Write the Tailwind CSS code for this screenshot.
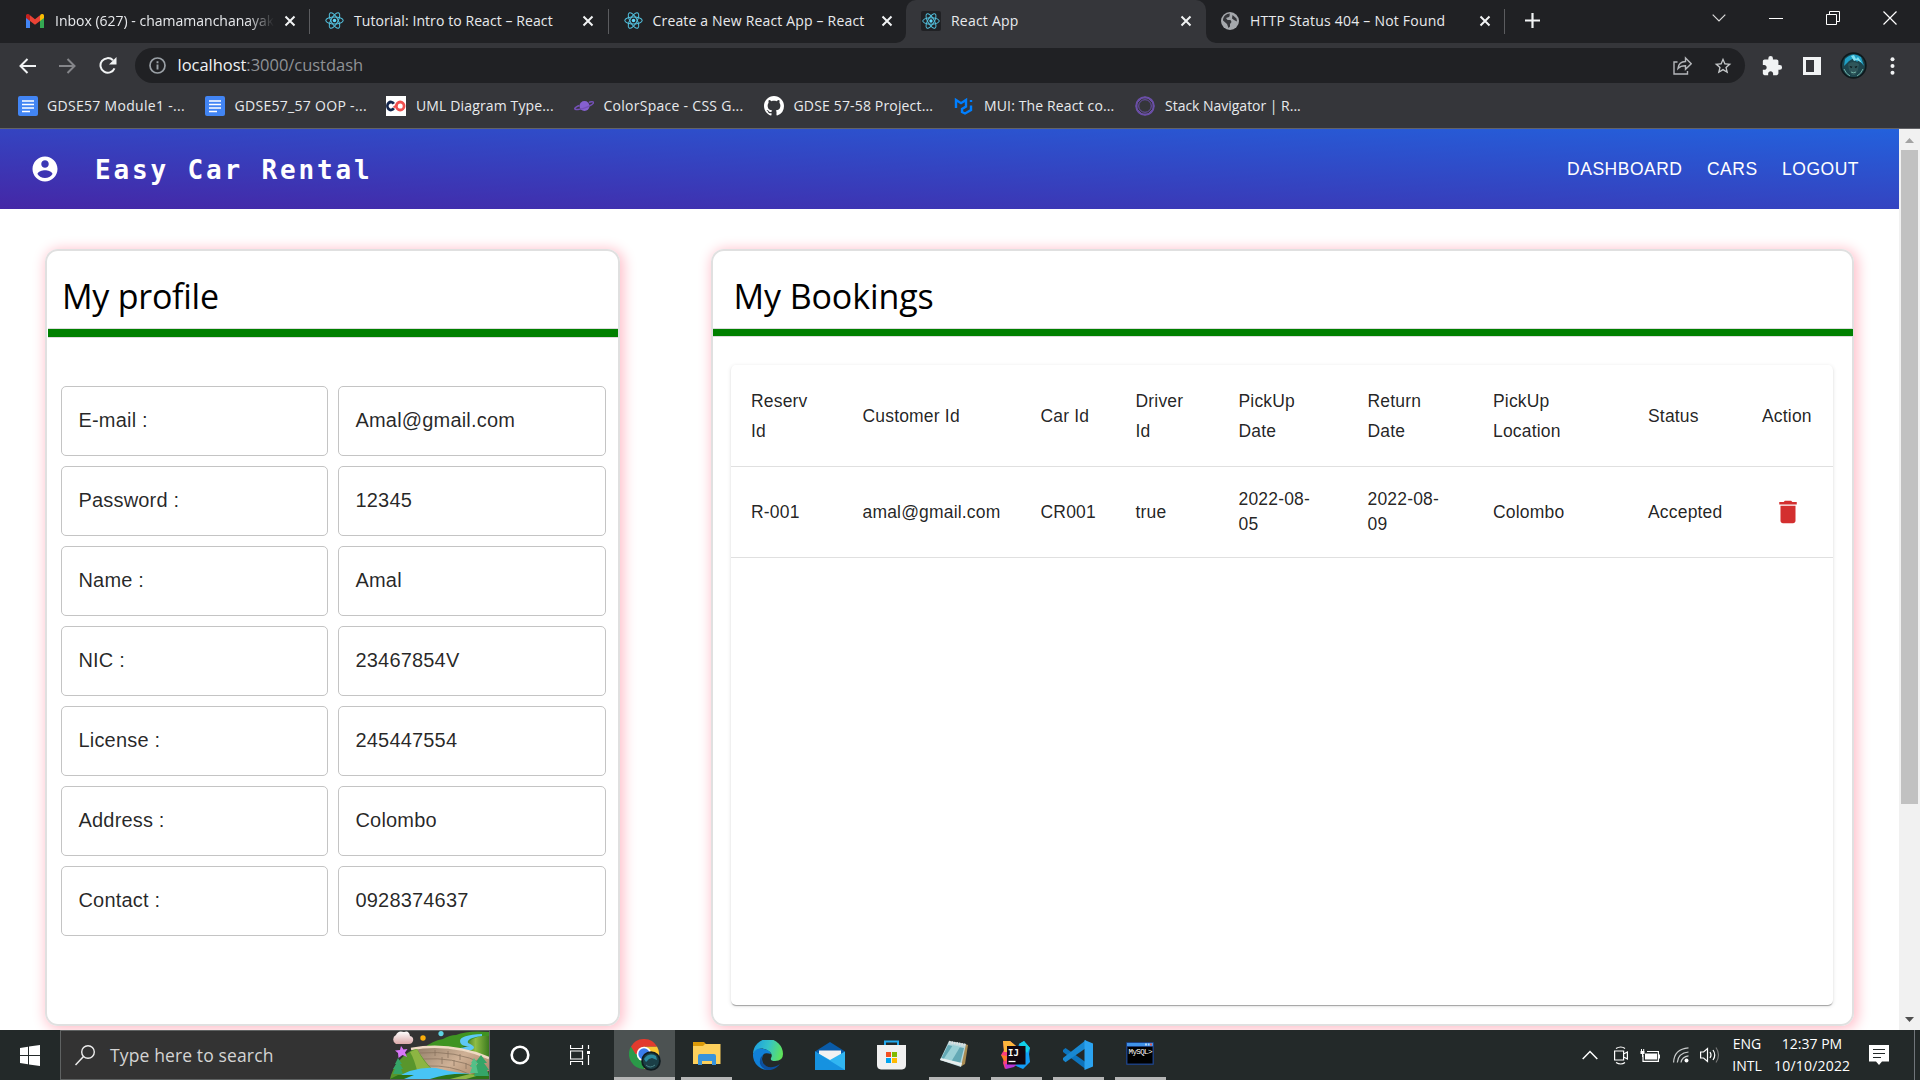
<!DOCTYPE html>
<html lang="en">
<head>
<meta charset="utf-8">
<title>React App</title>
<script src="https://cdn.jsdelivr.net/npm/@tailwindcss/browser@4"></script>
</head>
<body class="w-[1920px] h-[1080px] overflow-hidden bg-white flex flex-col font-['Open_Sans',sans-serif] whitespace-nowrap">
<svg class="hidden">
  <symbol id="react" viewBox="0 0 24 24"><g fill="none" stroke="#53c1de" stroke-width="1.3"><ellipse cx="12" cy="12" rx="11" ry="4.3"/><ellipse cx="12" cy="12" rx="11" ry="4.3" transform="rotate(60 12 12)"/><ellipse cx="12" cy="12" rx="11" ry="4.3" transform="rotate(120 12 12)"/></g><circle cx="12" cy="12" r="2.2" fill="#61dafb"/></symbol>
  <symbol id="close" viewBox="0 0 12 12"><path d="M1.5 1.5l9 9m0-9l-9 9" stroke="#f1f3f4" stroke-width="2" fill="none"/></symbol>
  <symbol id="docs" viewBox="0 0 20 20"><rect width="20" height="20" rx="2" fill="#4285f4"/><path d="M4 5h12M4 8.500h12M4 12h12M4 15.500h8" stroke="#fff" stroke-width="1.700"/></symbol>
</svg>

<!-- tab strip -->
<div class="h-[43px] shrink-0 bg-[#202124] flex text-[14px] leading-[20px] text-[#e8eaed]">
  <div class="w-[309px] flex items-center pl-[26px] pb-[2px]">
    <svg class="w-[18px] h-[14px]" viewBox="0 0 18 14"><path d="M0 1.500V14h4V6z" fill="#4285f4"/><path d="M18 1.500V14h-4V6z" fill="#34a853"/><path d="M14 1.600V7l4-3V1.800C18 0 16-.6 14.600.6z" fill="#fbbc04"/><path d="M4 1.600V7L0 4V1.800C0 0 2-.6 3.400.6z" fill="#c5221f"/><path d="M4 1.300l5 3.900 5-3.900V7l-5 3.800L4 7z" fill="#ea4335"/></svg>
    <div class="ml-[11px] w-[219px] overflow-hidden [mask-image:linear-gradient(to_right,#000_88%,transparent)]">Inbox (627) - chamamanchanayak</div>
    <svg class="ml-[10px] w-[12px] h-[12px]"><use href="#close"/></svg>
  </div>
  <div class="w-[299px] flex items-center pb-[2px]">
    <i class="w-px h-[25px] mt-[2px] bg-[#5b5c5f]"></i>
    <svg class="ml-[15px] w-[19px] h-[19px]"><use href="#react"/></svg>
    <div class="ml-[10px] w-[228px] tracking-[0.08px]">Tutorial: Intro to React – React</div>
    <svg class="w-[12px] h-[12px]"><use href="#close"/></svg>
  </div>
  <div class="w-[298px] flex items-center pb-[2px]">
    <i class="w-px h-[25px] mt-[2px] bg-[#5b5c5f]"></i>
    <svg class="ml-[15px] w-[19px] h-[19px]"><use href="#react"/></svg>
    <div class="ml-[9.500px] w-[228.500px] tracking-[0.17px]">Create a New React App – React</div>
    <svg class="w-[12px] h-[12px]"><use href="#close"/></svg>
  </div>
  <div class="w-[300px] flex bg-[#35363a] rounded-t-[10px] relative items-center pb-[2px]">
    <svg class="absolute -left-[10px] bottom-0 w-[10px] h-[10px]" viewBox="0 0 10 10"><path d="M10 0v10H0A10 10 0 0 0 10 0z" fill="#35363a"/></svg>
    <svg class="absolute -right-[10px] bottom-0 w-[10px] h-[10px]" viewBox="0 0 10 10"><path d="M0 0v10h10A10 10 0 0 1 0 0z" fill="#35363a"/></svg>
    <div class="ml-[15px] w-[20px] h-[20px] rounded-[2px] bg-[#202124] grid place-items-center"><svg class="w-[18px] h-[18px]"><use href="#react"/></svg></div>
    <div class="ml-[10px] w-[229px] tracking-[0.22px]">React App</div>
    <svg class="w-[12px] h-[12px]"><use href="#close"/></svg>
  </div>
  <div class="w-[298px] flex items-center pl-[15px] pb-[2px]">
    <svg class="w-[18px] h-[18px]" viewBox="0 0 18 18"><circle cx="9" cy="9" r="9" fill="#a5a8ac"/><path d="M9 1.500c-1 1.500.5 2-1 3.500L5 6l1.500 2h3l1 2-1.500 2v2.500L7.500 16 6 12 2 8.500C2 4.500 5 1.500 9 1.500zM11.500 3l4 3.500.5 3-3-1.500-2-1.500z" fill="#35363a"/></svg>
    <div class="ml-[11px] w-[229px] tracking-[0.22px]">HTTP Status 404 – Not Found</div>
    <svg class="w-[12px] h-[12px]"><use href="#close"/></svg>
  </div>
  <div class="flex-1 flex items-center pb-[2px]">
    <i class="w-px h-[25px] mt-[2px] bg-[#5b5c5f]"></i>
    <svg class="ml-[20px] w-[15px] h-[15px]" viewBox="0 0 15 15"><path d="M7.500 0v15M0 7.500h15" stroke="#f1f3f4" stroke-width="2.200"/></svg>
    <svg class="ml-[172px] mb-[5px] w-[14px] h-[8px]" viewBox="0 0 14 8"><path d="M.7.7L7 7l6.300-6.300" fill="none" stroke="#dcdcdc" stroke-width="1.200"/></svg>
    <div class="ml-[43px] mb-[5px] w-[14px] h-px bg-white"></div>
    <svg class="ml-[43px] mb-[6px] w-[14px] h-[14px]" viewBox="0 0 14 14"><path d="M.5 3.500h10v10H.5zM3.500 3V.5h10v10H11" fill="none" stroke="#fff"/></svg>
    <svg class="ml-[43px] mb-[6px] w-[14px] h-[14px]" viewBox="0 0 14 14"><path d="M.5.5l13 13m0-13l-13 13" stroke="#fff" stroke-width="1.200"/></svg>
  </div>
</div>

<!-- address bar -->
<div class="h-[45px] shrink-0 bg-[#35363a] flex items-center">
  <svg class="ml-[19px] w-[17px] h-[16px]" viewBox="0 0 17 16"><path d="M17 8H1.500M8.500 1l-7 7 7 7" fill="none" stroke="#f1f3f4" stroke-width="2"/></svg>
  <svg class="ml-[23px] w-[17px] h-[16px]" viewBox="0 0 17 16"><path d="M0 8h15.500M8.500 1l7 7-7 7" fill="none" stroke="#85868a" stroke-width="2"/></svg>
  <svg class="ml-[23px] w-[18px] h-[17px]" viewBox="0 0 18 17"><path d="M15.500 11.300A7.300 7.300 0 1 1 14 3.300" fill="none" stroke="#f1f3f4" stroke-width="2"/><path d="M17.500 0v7.500H10z" fill="#f1f3f4"/></svg>
  <div class="ml-[18px] w-[1610px] h-[35px] rounded-full bg-[#202124] flex items-center">
    <svg class="ml-[14px] w-[17px] h-[17px]" viewBox="0 0 17 17"><circle cx="8.500" cy="8.500" r="7.500" fill="none" stroke="#9aa0a6" stroke-width="1.700"/><path d="M8.500 7.500v5M8.500 4.200v2" stroke="#9aa0a6" stroke-width="1.900"/></svg>
    <div class="ml-[11.500px] w-[1495.500px] text-[16.500px] leading-[22px] tracking-[-0.03px] text-[#8f9296] pb-px"><span class="text-[#f1f3f4]">localhost</span>:3000/custdash</div>
    <svg class="w-[19px] h-[19px]" viewBox="0 0 19 19"><path d="M4.500 6H1v12h13.500v-3M5 12.500C5.500 8 8 5.500 12.500 5.500V2l5.700 5.700-5.700 5.600V9.800C9 9.800 6.800 10.500 5 12.500z" fill="none" stroke="#b4b6ba" stroke-width="1.400"/></svg>
    <svg class="ml-[21px] w-[20px] h-[20px]" viewBox="0 0 24 24"><path d="M22 9.240l-7.190-.620L12 2 9.190 8.630 2 9.240l5.460 4.730L5.820 21 12 17.270 18.180 21l-1.630-7.030L22 9.240zM12 15.400l-3.760 2.270 1-4.280-3.320-2.880 4.380-.380L12 6.100l1.710 4.040 4.380.380-3.320 2.880 1 4.280L12 15.400z" fill="#c4c7c9"/></svg>
  </div>
  <svg class="ml-[16px] w-[22px] h-[22px]" viewBox="0 0 24 24"><path d="M20.500 11H19V7c0-1.100-.9-2-2-2h-4V3.500a2.500 2.500 0 0 0-5 0V5H4c-1.100 0-1.990.9-1.990 2v3.800H3.500c1.490 0 2.700 1.210 2.700 2.700s-1.210 2.700-2.700 2.700H2V20c0 1.100.9 2 2 2h3.800v-1.500c0-1.490 1.210-2.700 2.700-2.700s2.700 1.210 2.700 2.700V22H17c1.100 0 2-.9 2-2v-4h1.500a2.500 2.500 0 0 0 0-5z" fill="#f1f3f4"/></svg>
  <svg class="ml-[20px] w-[18px] h-[18px]" viewBox="0 0 18 18"><path d="M0 0h18v18H0zM3 3v12h8V3z" fill="#f1f3f4" fill-rule="evenodd"/></svg>
  <svg class="ml-[19px] w-[27px] h-[27px]" viewBox="0 0 27 27"><circle cx="13.500" cy="13.500" r="13.200" fill="#0e191c"/><circle cx="13.500" cy="13.500" r="11.500" fill="#1d454d"/><path d="M5 7Q13-1 21 5l3 9-5-6-2 2-3-4-5 3-5 5z" fill="#1f9fc4"/><path d="M11 4l3-1 2 4 2-2 4 6-5-3-3 1z" fill="#7fe0f0"/><path d="M8 12q5-4 11 0l-1 6-3 5h-3l-3-5z" fill="#2f565a"/><path d="M9.500 14l3 .8-1.500 1.500zM17.500 14l-3 .8 1.500 1.500z" fill="#0a1518"/><path d="M11 20q2.500 1.500 5 0M4 17q2 5 6 7m13-7q-2 5-6 7" stroke="#6fb0a5" fill="none"/></svg>
  <svg class="ml-[23px] w-[5px] h-[18px]" viewBox="0 0 5 18" fill="#f1f3f4"><circle cx="2.500" cy="2.200" r="2"/><circle cx="2.500" cy="9" r="2"/><circle cx="2.500" cy="15.800" r="2"/></svg>
</div>

<!-- bookmarks -->
<div class="h-[41px] shrink-0 bg-[#35363a] border-b border-[#626367] flex items-center pb-[5px] pl-[18px] pt-px text-[14px] leading-[20px] text-[#e8eaed]">
  <svg class="w-[20px] h-[20px]"><use href="#docs"/></svg>
  <div class="ml-[9px] w-[158px] tracking-[0.3px]">GDSE57 Module1 -...</div>
  <svg class="w-[20px] h-[20px]"><use href="#docs"/></svg>
  <div class="ml-[9.500px] w-[151.500px] tracking-[0.3px]">GDSE57_57 OOP -...</div>
  <svg class="w-[20px] h-[20px]" viewBox="0 0 20 20"><rect width="20" height="20" fill="#fff"/><path d="M7.800 7.700a3.500 4 0 1 0 0 4.600" fill="none" stroke="#13254b" stroke-width="2.800"/><ellipse cx="14.200" cy="10" rx="3.900" ry="4" fill="none" stroke="#f0504f" stroke-width="2.800"/><path d="M7.500 11.500l4-3" stroke="#f0504f" stroke-width="1.800"/></svg>
  <div class="ml-[10px] w-[158px] tracking-[0.14px]">UML Diagram Type...</div>
  <svg class="w-[20px] h-[20px]" viewBox="0 0 20 20"><circle cx="10.500" cy="10" r="5" fill="#8560d0"/><path d="M5.500 9.500C0 11.500-1 14 4 13.500c6-.5 16-5 15.500-7C19.300 5.300 16 6 15 6.500" fill="none" stroke="#7550b8" stroke-width="1.500"/></svg>
  <div class="ml-[9.500px] w-[160.500px] tracking-[0.27px]">ColorSpace - CSS G...</div>
  <svg class="w-[20px] h-[20px]" viewBox="0 0 16 16"><path fill="#fff" d="M8 0C3.580 0 0 3.580 0 8c0 3.540 2.290 6.530 5.470 7.590.4.070.55-.17.55-.38 0-.19-.010-.82-.010-1.490-2.010.37-2.530-.49-2.690-.94-.090-.23-.48-.94-.82-1.130-.28-.15-.68-.52-.010-.53.630-.010 1.080.58 1.230.82.720 1.210 1.870.87 2.330.66.070-.52.280-.87.510-1.070-1.780-.2-3.640-.89-3.640-3.950 0-.87.310-1.590.82-2.150-.080-.2-.36-1.020.080-2.120 0 0 .67-.21 2.200.82.640-.18 1.320-.27 2-.27s1.360.090 2 .27c1.530-1.040 2.200-.82 2.200-.82.440 1.100.160 1.920.080 2.120.510.56.820 1.270.820 2.150 0 3.070-1.870 3.750-3.650 3.950.290.250.540.730.540 1.480 0 1.070-.010 1.930-.010 2.200 0 .210.150.460.550.380A8.010 8.010 0 0 0 16 8c0-4.420-3.580-8-8-8z"/></svg>
  <div class="ml-[9.500px] w-[160.500px] tracking-[0.16px]">GDSE 57-58 Project...</div>
  <svg class="w-[20px] h-[20px]" viewBox="0 0 20 20"><path d="M2 12V4l5 3.200L12 4v6.500l-4 2.500v3l3 1.500 6-3.500V9.500M17 4v2" fill="none" stroke="#007fff" stroke-width="2.400"/></svg>
  <div class="ml-[10px] w-[151px] tracking-[0.14px]">MUI: The React co...</div>
  <svg class="w-[20px] h-[20px]" viewBox="0 0 20 20"><g fill="none" stroke="#6b4fa8"><circle cx="10" cy="10" r="9" stroke-width="1.500"/><circle cx="10" cy="10" r="6.300"/><path d="M7 2l6 0 5 5v6l-5 5H7l-5-5V7zM10 1l6.500 3L19 10l-2.500 6.500L10 19l-6.500-2.500L1 10l2.500-6z"/></g></svg>
  <div class="ml-[10px] tracking-[-0.02px]">Stack Navigator | R...</div>
</div>

<!-- page -->
<div class="h-[901px] shrink-0 flex">
  <div class="w-[1899px] flex flex-col">
    <header class="h-[80px] shrink-0 flex items-center text-white bg-[linear-gradient(to_right_top,#4527a6,#2361dc)]">
      <svg class="ml-[30px] w-[30px] h-[30px]" viewBox="0 0 24 24"><path fill="#fff" d="M12 2C6.480 2 2 6.480 2 12s4.480 10 10 10 10-4.480 10-10S17.520 2 12 2zm0 3c1.660 0 3 1.340 3 3s-1.340 3-3 3-3-1.340-3-3 1.340-3 3-3zm0 14.200c-2.500 0-4.710-1.280-6-3.220.030-1.990 4-3.080 6-3.080 1.990 0 5.970 1.090 6 3.080-1.290 1.940-3.500 3.220-6 3.220z"/></svg>
      <h2 class="ml-[35px] pt-[2px] font-bold text-[26px] tracking-[2.850px] font-['DejaVu_Sans_Mono',monospace]">Easy Car Rental</h2>
      <nav class="ml-auto mr-[40px] flex gap-[24.500px] text-[17.500px] tracking-[0.5px] font-['Liberation_Sans',sans-serif]"><span>DASHBOARD</span><span>CARS</span><span>LOGOUT</span></nav>
    </header>
    <main class="flex-1 flex pt-[40px] pl-[45px] items-start">
      <section class="w-[575px] h-[777px] rounded-[13px] border-2 border-[#e0e0e0] shadow-[2px_2px_13px_2px_pink] flex flex-col">
        <h1 class="h-[77px] pl-[15px] pt-[20px] text-[34px] leading-[50px] tracking-[-0.25px] text-black">My profile</h1>
        <div class="h-[10px] ml-px bg-[#008000] border-y border-[#dcdcdc]"></div>
        <div class="mt-[48px] ml-[14px] grid grid-cols-[267px_268px] auto-rows-[70px] gap-[10px] font-['Liberation_Sans',sans-serif] text-[20px] leading-[28px] tracking-[0.18px] text-black/85 *:border *:border-[#c4c4c4] *:rounded-[5px] *:pl-[16.500px] *:flex *:items-center *:pb-[2px]">
          <div>E-mail :</div><div>Amal@gmail.com</div>
          <div>Password :</div><div>12345</div>
          <div>Name :</div><div>Amal</div>
          <div>NIC :</div><div>23467854V</div>
          <div>License :</div><div>245447554</div>
          <div>Address :</div><div>Colombo</div>
          <div>Contact :</div><div>0928374637</div>
        </div>
      </section>
      <section class="ml-[91px] w-[1143px] h-[777px] rounded-[13px] border-2 border-[#e0e0e0] shadow-[2px_2px_13px_2px_pink] flex flex-col">
        <h1 class="h-[77px] pl-[20.500px] pt-[20px] text-[34px] leading-[50px] tracking-[-0.1px] text-black">My Bookings</h1>
        <div class="h-[9px] -mr-px bg-[#008000] border-y border-[#dcdcdc]"></div>
        <div class="mt-[28px] ml-[18px] w-[1102px] h-[640px] rounded-[5px] shadow-[0_2px_1px_-1px_rgba(0,0,0,0.2),0_1px_1px_0_rgba(0,0,0,0.14),0_1px_4px_0_rgba(0,0,0,0.12)] font-['Liberation_Sans',sans-serif] text-[17.500px] tracking-[0.18px] text-black/87">
          <div class="h-[102px] border-b border-[#e0e0e0] pl-[20px] grid grid-cols-[111.500px_178px_95px_103px_129px_125.500px_155px_114px_72px] items-center leading-[30px]">
            <div>Reserv<br>Id</div><div>Customer Id</div><div>Car Id</div><div>Driver<br>Id</div><div>PickUp<br>Date</div><div>Return<br>Date</div><div>PickUp<br>Location</div><div>Status</div><div>Action</div>
          </div>
          <div class="h-[91px] border-b border-[#e0e0e0] pl-[20px] grid grid-cols-[111.500px_178px_95px_103px_129px_125.500px_155px_114px_52px] items-center leading-[25px]">
            <div>R-001</div><div>amal@gmail.com</div><div>CR001</div><div>true</div><div>2022-08-<br>05</div><div>2022-08-<br>09</div><div>Colombo</div><div>Accepted</div>
            <svg class="justify-self-center w-[30px] h-[30px]" viewBox="0 0 24 24"><path fill="#d32f2f" d="M6 19c0 1.100.9 2 2 2h8c1.100 0 2-.9 2-2V7H6v12zM19 4h-3.500l-1-1h-5l-1 1H5v2h14V4z"/></svg>
          </div>
        </div>
      </section>
    </main>
  </div>
  <div class="w-[21px] bg-[#f1f1f1] flex flex-col items-center">
    <svg class="mt-[9px] w-[9px] h-[5px]" viewBox="0 0 9 5"><path d="M0 5l4.500-5L9 5z" fill="#a3a3a3"/></svg>
    <div class="mt-[7px] w-[17px] h-[654px] bg-[#c1c1c1]"></div>
    <svg class="mt-[213px] w-[9px] h-[5px]" viewBox="0 0 9 5"><path d="M0 0l4.500 5L9 0z" fill="#505050"/></svg>
  </div>
</div>

<!-- taskbar -->
<div class="h-[50px] shrink-0 bg-[#232929] flex items-center text-white">
  <svg class="ml-[20px] w-[20px] h-[21px]" viewBox="0 0 20 21" fill="#fff"><path d="M0 3l8-1.200V10H0zM9 1.600L20 0v10H9zM0 11h8v8.200L0 18zM9 11h11v10L9 19.400z"/></svg>
  <div class="ml-[20px] w-[430px] h-[50px] bg-[#333] border border-[#5f6262] flex items-center">
    <svg class="ml-[14px] w-[20px] h-[21px]" viewBox="0 0 20 21"><circle cx="13" cy="7" r="6.300" fill="none" stroke="#eee" stroke-width="1.400"/><path d="M8.500 11.500L.5 20" stroke="#eee" stroke-width="1.500"/></svg>
    <div class="ml-[15px] w-[280px] text-[17.500px] tracking-[0.13px] text-[#d4d4d4]">Type here to search</div>
    <svg class="w-[99px] h-[48px]" viewBox="0 0 99 48">
      <defs><linearGradient id="hill" x1="0" x2="1"><stop offset="0" stop-color="#1d5b14"/><stop offset=".5" stop-color="#8fbd45"/><stop offset="1" stop-color="#3b7a1e"/></linearGradient><linearGradient id="dam" x1="0" x2="1" y2=".6"><stop offset="0" stop-color="#8d7a66"/><stop offset=".6" stop-color="#cfb196"/><stop offset="1" stop-color="#b08d70"/></linearGradient><linearGradient id="cl" x2="0" y2="1"><stop offset="0" stop-color="#fff"/><stop offset="1" stop-color="#dba9a9"/></linearGradient></defs>
      <path d="M34 17Q42 10 53 8Q60 4 66 4Q78-1 99 1V34L40 22z" fill="#3f9422"/><path d="M72 17q12-14 27-12v24z" fill="url(#hill)"/>
      <path d="M92 3Q70 4 70 10T80 15L66 18L78 20Q90 17 78 12Q76 7 92 5z" fill="#5ec8f5"/>
      <path d="M22 17Q60 13 99 27V40L78 48H44z" fill="url(#dam)"/><path d="M21 18Q60 11 99 27" fill="none" stroke="#f0dac4" stroke-width="2.500"/>
      <path d="M30 22q36-3 64 11M33 28q30-2 54 9M37 35q24-1 42 8M45 19v6M58 20v7M70 23v6M52 26v7M64 29v6M76 32v6" fill="none" stroke="#8b7560" stroke-width=".8"/>
      <path d="M0 48Q4 30 22 19L27 18Q34 30 42 38L20 45z" fill="#59962c"/><path d="M27 18q7 14 15 20l-14 5q-4-16-8-22z" fill="#8db543"/>
      <path d="M4 48q20-13 42-11 22 6 53 7v4z" fill="#48c4f5"/><path d="M0 48l8-4 16 0-10 4zM40 48q18-6 40-5l19-2v7z" fill="#2d7318"/><path d="M60 48l20-5 10 1-14 4z" fill="#8db543"/>
      <path d="M8 27l4 6h-2l3 5h-2l2 5H3l2-5H3l3-5H5zM91 24l6 8h-3l5 7h-2l2 6H84l2-6h-3l5-7h-3z" fill="#35a568"/><path d="M84 27l4 6h-2l2 9h-8l2-6h-2l2-4h-1z" fill="#54c088"/>
      <path d="M6 13a5 5 0 0 1 0-9Q8-1 14 1q5-2 6 4 4 1 3 5-1 3-4 3z" fill="url(#cl)"/><circle cx="33" cy="7" r="2.700" fill="#fcae0a"/><circle cx="51" cy="2.600" r="2.600" fill="#5fd4e4"/><path d="M11 15l2.500 3.500 4-.5-2.500 3.500 2 4.500-4.500-2-4 3-.5-5-3-2.500 5-.5z" fill="#d877f8"/>
    </svg>
  </div>
  <svg class="ml-[20px] w-[20px] h-[20px]" viewBox="0 0 20 20"><circle cx="10" cy="10" r="8.300" fill="none" stroke="#fff" stroke-width="2.600"/></svg>
  <svg class="ml-[40px] w-[20px] h-[20px]" viewBox="0 0 20 20"><path d="M.5 0v3.500h12V0M.5 20v-3.500h12V20M.5 6h12v8H.5zM18.500 0v4M18.500 10v10" fill="none" stroke="#fff" stroke-width="1.200"/><path d="M17 6h3v3h-3z" fill="#fff"/></svg>
  <div class="ml-[24px] w-[61px] h-[50px] bg-[#4c5252] border-b-3 border-[#b5b6b6] flex items-center pl-[15px] pt-[3px]">
    <svg class="w-[32px] h-[32px]" viewBox="0 0 32 32"><path d="M15 15V7.500h13A15 15 0 0 1 15 30z" fill="#fcc934"/><path d="M15 15l6.500 3.700L15 30A15 15 0 0 1 2 7.500z" fill="#2a9a48"/><path d="M2 7.500A15 15 0 0 1 28 7.500H15v7.500H6.500z" fill="#e33b2e"/><circle cx="15" cy="15" r="7.300" fill="#fff"/><circle cx="15" cy="15" r="5.700" fill="#3b7ded"/><circle cx="22" cy="22" r="9.800" fill="#101c20"/><circle cx="22" cy="22" r="8" fill="#1b3f47"/><path d="M15 20q5-7 12-3l1 4-5-2-3 1-3 3z" fill="#2c8ba0"/><path d="M17 26q4 4 9 0" fill="none" stroke="#4c8588"/></svg>
  </div>
  <div class="ml-[6px] w-[51px] h-[50px] border-b-3 border-[#b5b6b6] grid place-items-center">
    <svg class="w-[28px] h-[24px]" viewBox="0 0 28 24"><path d="M0 0h11l2 2v6H0z" fill="#dc9a08"/><path d="M0 4h10l2-2h15.500v20H0z" fill="#fdd05c"/><path d="M5 23V14q0-2 2-2h14q2 0 2 2v9h-4v-4H9v4z" fill="#3893dc"/></svg>
  </div>
  <svg class="ml-[21px] w-[30px] h-[30px]" viewBox="0 0 30 30"><defs><linearGradient id="e1" x1="0" y1=".3" x2="1" y2=".5"><stop offset="0" stop-color="#1b9de0"/><stop offset=".5" stop-color="#35c3c8"/><stop offset="1" stop-color="#5fe35a"/></linearGradient></defs><path d="M0 14A15 15 0 0 1 30 14q0 7-8 7-5 0-4-3 2-3-1-6Q8 4 0 14z" fill="url(#e1)"/><path d="M0 14Q3 7 11 9q6 1 7 5-9-3-9 5 0 8 9 10.700A15 15 0 0 1 0 14z" fill="#1080d8"/><path d="M11 14q-4 4-1 9 6 8 17 1A15 15 0 0 1 13 30Q4 25 8 17z" fill="#0c4f9e"/></svg>
  <svg class="ml-[32px] mt-px w-[30px] h-[28px]" viewBox="0 0 30 28"><path d="M0 9.500L15 0l15 9.500V20H0z" fill="#0a5ba8"/><path d="M4 8.500h22V20H4z" fill="#f2f2f2"/><path d="M0 9.500L15 18 30 9.500V28H0z" fill="#31b6f2"/><path d="M0 9.500L30 28H0z" fill="#1692e0"/></svg>
  <svg class="ml-[32px] w-[29px] h-[30px]" viewBox="0 0 29 30"><path d="M8 6V1.500h13V6" fill="none" stroke="#22a9ee" stroke-width="2"/><path d="M0 5h29v20q0 4-4 4.500H4Q0 29 0 25z" fill="#f0f0f0"/><path d="M9 12h5v5H9z" fill="#f25022"/><path d="M15 12h5v5h-5z" fill="#7fba00"/><path d="M9 18h5v5H9z" fill="#00a4ef"/><path d="M15 18h5v5h-5z" fill="#ffb900"/></svg>
  <div class="ml-[23px] w-[51px] h-[50px] border-b-3 border-[#b5b6b6] grid place-items-center">
    <svg class="w-[28px] h-[28px] -ml-[2px]" viewBox="0 0 28 28"><path d="M25 4l3 1-3 19-5 3z" fill="#a98b52"/><path d="M9 1l17 3-5 23L0 20z" fill="#b9d8dd"/><path d="M8 5l16 3-4 16L1 19z" fill="#63a9b5"/><path d="M13 5l7 2-9 15-8-2z" fill="#9ad0d6"/><path d="M9 2l17 3" stroke="#e0e0e0" stroke-width="2.500" stroke-dasharray="1.500 1"/><path d="M0 20l21 6 1-3-21-5z" fill="#e8eeee"/></svg>
  </div>
  <div class="ml-[11px] w-[51px] h-[50px] border-b-3 border-[#b5b6b6] grid place-items-center pt-[3px]">
    <svg class="w-[30px] h-[30px] -ml-[2px]" viewBox="0 0 30 30"><path d="M2 1l7 0 6 5-3 18-8 5-2-6 1-5-3-3 3-5z" fill="#fb3f7d"/><path d="M2 1l7 0 6 5-8 6-4 0z" fill="#fdb73c"/><path d="M0 15l6 1-1 5-2 0z" fill="#fa7e22"/><path d="M18 4l5-3 6 7-1 6 1 8-7 7-9-4z" fill="#139bf5"/><path d="M18 4l5-3 6 7-3 5z" fill="#12d0e6"/><path d="M4 24h12l-3 3-8 2z" fill="#b835d8"/><rect x="6" y="6" width="18.500" height="18.500" fill="#120710"/><text x="7" y="15.500" font-family="DejaVu Sans Mono" font-weight="bold" font-size="9" fill="#fff">IJ</text><path d="M7.500 21.500h7" stroke="#fff" stroke-width="1.300"/></svg>
  </div>
  <div class="ml-[11px] w-[51px] h-[50px] border-b-3 border-[#b5b6b6] grid place-items-center pt-[3px]">
    <svg class="w-[30px] h-[30px] -ml-px" viewBox="0 0 30 30"><path d="M0 10l2.500-2 20 14v7L0 12z" fill="#0d74bd"/><path d="M0 20l2.500 2.300L23 8V0L0 18z" fill="#1888d2"/><path d="M21.500 0L30 3.500v23L21.500 30z" fill="#2ba3f0"/></svg>
  </div>
  <div class="ml-[11px] w-[51px] h-[50px] border-b-3 border-[#b5b6b6] grid place-items-center">
    <svg class="w-[28px] h-[23px] -ml-[2px]" viewBox="0 0 28 23"><rect width="28" height="23" rx="1" fill="#1d3f7e"/><path d="M1 1h26v3H1z" fill="#3f93ea"/><path d="M19 1.500h2v2h-2zm3 0h1.500v2H22z" fill="#b8d4f4"/><path d="M24 1.500h2v2h-2z" fill="#e05a50"/><path d="M1.500 5h25v16.500h-25z" fill="#000"/><text x="2.500" y="12" font-family="Liberation Mono" font-size="7.500" textLength="24" fill="#fff">MySQL&gt;</text></svg>
  </div>
  <svg class="ml-auto w-[16px] h-[10px]" viewBox="0 0 16 10"><path d="M.7 9L8 1.500 15.300 9" fill="none" stroke="#fff" stroke-width="1.500"/></svg>
  <svg class="ml-[16px] w-[14px] h-[19px]" viewBox="0 0 14 19"><path d="M.6 5h9v9H.6zM9.600 8l3.800-2v7l-3.800-2M2 2.500Q7-.5 11 2.500M2 16.500q5 3 9 0" fill="none" stroke="#fff" stroke-width="1.200"/></svg>
  <svg class="ml-[12px] w-[20px] h-[13px]" viewBox="0 0 20 13"><path d="M3 5.500v6.900h15.400V2.500H7" fill="none" stroke="#fff" stroke-width="1.200"/><path d="M5 4.500h12v6H5zM18.500 5.500H20v4h-1.500zM.5 2h4v3h-4zM1 0h1v2H1zM3.200 0h1v2h-1zM2 5h1v3H2z" fill="#fff"/></svg>
  <svg class="ml-[13px] w-[16px] h-[16px]" viewBox="0 0 16 16"><g fill="none" stroke="#c9cccc" stroke-width="1.200"><path d="M.6 15.500Q1 2 15.500.8"/><path d="M4.300 15.500Q5 6 15.500 5"/><path d="M8 15.500Q9 9.500 15.500 8.800"/></g><circle cx="13.500" cy="13.500" r="2" fill="#fff"/></svg>
  <svg class="ml-[11px] w-[20px] h-[18px]" viewBox="0 0 20 18"><path d="M.6 6h3L7.500 2.500v13L3.600 12h-3z" fill="none" stroke="#fff" stroke-width="1.200"/><path d="M10 6q2 3 0 6M13 4q3.500 5 0 10" fill="none" stroke="#fff" stroke-width="1.200"/><path d="M16 1.500q5 7.500 0 15" fill="none" stroke="#777" stroke-width="1.200"/></svg>
  <div class="ml-[12px] w-[30px] text-[14px] leading-[22px] text-center">ENG<br>INTL</div>
  <div class="ml-[12px] w-[76px] text-[14px] leading-[22px] text-center">12:37 PM<br><span class="tracking-[0.2px]">10/10/2022</span></div>
  <svg class="ml-[19px] w-[20px] h-[20px]" viewBox="0 0 20 20"><path d="M0 0h20v16.500h-7L10 20l-3-3.500H0z" fill="#fff"/><path d="M4 4.500h12M4 8.500h12M4 12.500h8" stroke="#232929" stroke-width="1.200"/></svg>
  <i class="ml-[25px] mr-[5px] w-px h-[50px] bg-[#70757a]"></i>
</div>
</body>
</html>
